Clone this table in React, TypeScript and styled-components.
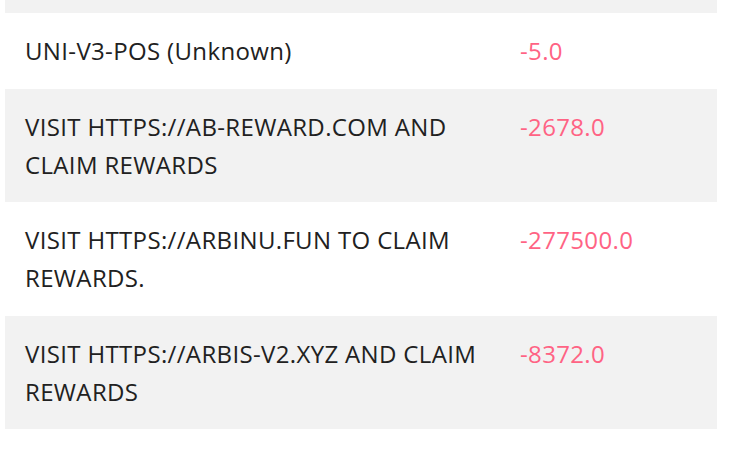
import styled, { createGlobalStyle } from "styled-components";

type Balance = {
  token: string;
  amount: number;
};

const balances: Balance[] = [
  { token: "UNI-V3-POS (Unknown)", amount: -5 },
  { token: "VISIT HTTPS://AB-REWARD.COM AND CLAIM REWARDS", amount: -2678 },
  { token: "VISIT HTTPS://ARBINU.FUN TO CLAIM REWARDS.", amount: -277500 },
  { token: "VISIT HTTPS://ARBIS-V2.XYZ AND CLAIM REWARDS", amount: -8372 },
];

const GlobalStyle = createGlobalStyle`
  body {
    margin: 0;
    background: #ffffff;
    font-family: "Open Sans", "Noto Sans", sans-serif;
  }
`;

const App = () => {
  return (
    <>
      <GlobalStyle />
      <BalanceTableStyled>
        {/* previous row, scrolled mostly out of view */}
        <BalanceRowStyled $striped $stub />
        {balances.map((item, index) => (
          <BalanceRowStyled key={item.token} $striped={index % 2 === 1}>
            <TokenCellStyled>{item.token}</TokenCellStyled>
            <AmountCellStyled $negative={item.amount < 0}>
              {item.amount.toFixed(1)}
            </AmountCellStyled>
          </BalanceRowStyled>
        ))}
      </BalanceTableStyled>
    </>
  );
};

const BalanceTableStyled = styled.div`
  display: flex;
  flex-direction: column;
  width: 712px;
  margin-left: 5px;
`;

const BalanceRowStyled = styled.div<{ $striped?: boolean; $stub?: boolean }>`
  display: grid;
  grid-template-columns: 475px 1fr;
  column-gap: 20px;
  padding: ${({ $stub }) => ($stub ? "0 20px" : "19px 20px 18.5px")};
  height: ${({ $stub }) => ($stub ? "13px" : "auto")};
  background: ${({ $striped }) => ($striped ? "#f2f2f2" : "#ffffff")};
  font-size: 24px;
  line-height: 38px;
  letter-spacing: 0.35px;
`;

const TokenCellStyled = styled.div`
  color: #212121;
`;

const AmountCellStyled = styled.div<{ $negative: boolean }>`
  color: ${({ $negative }) => ($negative ? "#ff6384" : "#2e7d32")};
`;

export default App;
